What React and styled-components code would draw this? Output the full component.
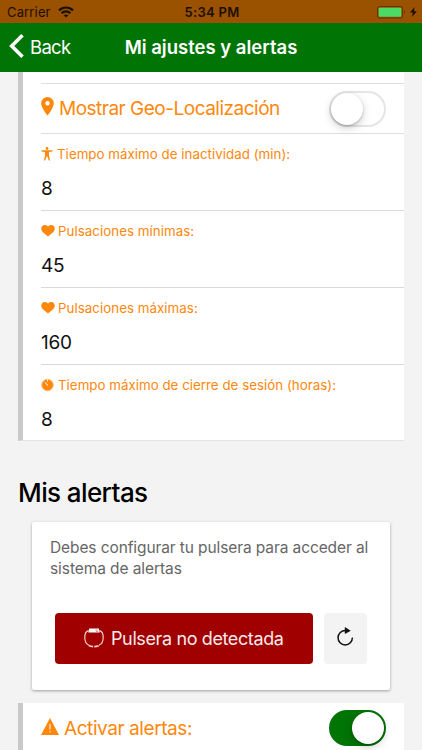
import React from "react";
import styled, { createGlobalStyle } from "styled-components";

const GlobalStyle = createGlobalStyle`
  * {
    box-sizing: border-box;
  }
  body {
    margin: 0;
    background: #f3f3f3;
    overflow: hidden;
    font-family: Inter, "Liberation Sans", sans-serif;
  }
`;

const Screen = styled.div`
  height: 750px;
  overflow: hidden;
  display: flex;
  flex-direction: column;
  background: #f3f3f3;
`;

const Text = styled.span`
  font-size: ${({ $size }) => $size}px;
  font-weight: ${({ $weight }) => $weight || 400};
  letter-spacing: ${({ $track }) => $track || 0}px;
  white-space: nowrap;
`;

const StatusBar = styled.header`
  flex: none;
  height: 23px;
  padding: 1px 5px 0 7px;
  display: grid;
  grid-template-columns: 1fr auto 1fr;
  align-items: center;
  background: #9a5200;
  color: #1c0f00;
`;

const StatusSide = styled.div`
  display: flex;
  align-items: center;
  justify-content: ${({ $end }) => ($end ? "flex-end" : "flex-start")};
  gap: ${({ $end }) => ($end ? 4 : 7)}px;
`;

const NavBar = styled.nav`
  flex: none;
  height: 49px;
  padding: 0 9px 1px;
  display: grid;
  grid-template-columns: 1fr auto 1fr;
  align-items: center;
  background: #007405;
  color: #fff;
`;

const BackButton = styled.div`
  display: flex;
  align-items: center;
  gap: 6px;
  svg {
    margin-bottom: 2px;
  }
`;

const Panel = styled.section`
  flex: none;
  margin: 0 18px;
  padding-left: 18px;
  background: #fff;
  border-left: 5px solid #c9c9c9;
`;

const SettingsPanel = styled(Panel)`
  padding-top: 11px;
  border-bottom: 1px solid #e4e4e4;
`;

const ToggleRow = styled.div`
  height: 51px;
  padding-right: 18px;
  display: flex;
  align-items: center;
  gap: ${({ $gap }) => $gap}px;
  border-top: 1px solid #dedede;
  border-bottom: 1px solid #dedede;
  color: #fe870c;
  > svg {
    margin-bottom: 4px;
  }
`;

const ActivateRow = styled(ToggleRow)`
  height: 50px;
  border: 0;
`;

const Toggle = styled.div`
  flex: none;
  width: 57px;
  height: 36px;
  margin-left: auto;
  padding: 2px;
  display: flex;
  justify-content: ${({ $on }) => ($on ? "flex-end" : "flex-start")};
  border-radius: 18px;
  background: ${({ $on }) => ($on ? "#007405" : "#fff")};
  box-shadow: ${({ $on }) => ($on ? "none" : "inset 0 0 0 2px #e5e5e5")};
`;

const Knob = styled.div`
  width: 32px;
  height: 32px;
  border-radius: 50%;
  background: #fff;
  box-shadow: 0 3px 8px rgba(0, 0, 0, 0.2), 0 1px 2px rgba(0, 0, 0, 0.22);
`;

const Field = styled.div`
  height: 77px;
  padding-top: 10px;
  border-bottom: 1px solid #d9d9d9;
  &:last-child {
    height: 75px;
    border-bottom: 0;
  }
`;

const FieldLabel = styled.div`
  height: 20px;
  display: flex;
  align-items: center;
  gap: ${({ $gap }) => $gap || 3}px;
  line-height: 20px;
  color: #fe870c;
  svg {
    margin-bottom: 1px;
  }
`;

const FieldValue = styled.div`
  margin-top: 13px;
  line-height: 24px;
  color: #111;
`;

const Heading = styled.h2`
  flex: none;
  height: 80px;
  margin: 0 0 0 18px;
  padding-top: 36px;
  line-height: 32px;
  color: #000;
`;

const AlertCard = styled.section`
  flex: none;
  height: 168px;
  margin: 1px 32px 13px;
  padding: 15px 18px 0;
  background: #fff;
  border-radius: 2px;
  box-shadow: 0 1px 3px rgba(0, 0, 0, 0.35);
`;

const CardText = styled.p`
  margin: 0;
  line-height: 21px;
  color: #666;
`;

const Actions = styled.div`
  display: flex;
  gap: 11px;
  margin: 34px 5px 0;
`;

const BandButton = styled.div`
  width: 258px;
  height: 51px;
  display: flex;
  align-items: center;
  padding-left: 29px;
  gap: 7px;
  border-radius: 4px;
  background: #a00000;
  color: #fbeaea;
  svg {
    margin-bottom: 1px;
  }
`;

const ReloadButton = styled.div`
  width: 43px;
  height: 51px;
  padding-bottom: 4px;
  display: flex;
  align-items: center;
  justify-content: center;
  border-radius: 4px;
  background: #f3f3f3;
`;

const WifiIcon = () => (
  <svg width="16" height="12" viewBox="0 0 16 12" fill="none" stroke="#1c0f00" strokeWidth="2.200">
    <path d="M1 4.400C5 .5 11 .5 15 4.400" />
    <path d="M3.600 7.200c2.500-2.500 6.300-2.500 8.800 0" />
    <path d="M8 11.600 5.700 9.300c1.300-1.200 3.300-1.200 4.600 0z" fill="#1c0f00" stroke="none" />
  </svg>
);

const BatteryIcon = () => (
  <svg width="29" height="13" viewBox="0 0 29 13">
    <rect x=".5" y=".5" width="25" height="11.500" rx="2" fill="none" stroke="#603300" />
    <rect x="1.700" y="1.700" width="22.600" height="9" rx="1" fill="#4cd964" />
    <path d="M27 4.500c1.500.6 1.500 3 0 3.600z" fill="#603300" />
  </svg>
);

const BoltIcon = () => (
  <svg width="7" height="10" viewBox="0 0 7 10">
    <path d="M4.500 0 0 5.500h2.800L2 10l4.800-5.800H4z" fill="#1c0f00" />
  </svg>
);

const BackIcon = () => (
  <svg width="15" height="24" viewBox="0 0 15 24" fill="none" stroke="#fff" strokeWidth="3.600">
    <path d="M13.500 1.300 2.700 12l10.800 10.700" />
  </svg>
);

const PinIcon = () => (
  <svg width="13" height="19" viewBox="0 0 13 19">
    <path
      fillRule="evenodd"
      fill="#fe870c"
      d="M6.500 0A6.300 6.300 0 0 0 .2 6.200C.2 10.800 6.500 18.600 6.500 18.600S12.800 10.800 12.800 6.200A6.300 6.300 0 0 0 6.500 0zm0 4.100a2.200 2.200 0 1 1 0 4.400 2.200 2.200 0 0 1 0-4.400z"
    />
  </svg>
);

const BodyIcon = () => (
  <svg width="12" height="14" viewBox="0 0 12 14" fill="#fe870c">
    <circle cx="6" cy="1.500" r="1.400" />
    <path d="M.5 3.300h11v1.100L7.900 5v3l1.200 5.500H7.900L6.400 9.500h-.8L4.100 13.500H2.900L4.100 8V5L.5 4.400z" />
  </svg>
);

const HeartIcon = () => (
  <svg width="14" height="12" viewBox="0 0 14 12">
    <path
      fill="#fe870c"
      d="M7 1.700C5.800-.4 2.800-.5 1.300 1c-1.500 1.600-1.300 4 0 5.500C2.600 8.200 5.200 9.700 7 11.600c1.800-1.900 4.400-3.400 5.700-5.100 1.300-1.500 1.500-3.900 0-5.500C11.200-.5 8.200-.4 7 1.700z"
    />
  </svg>
);

const TimerIcon = () => (
  <svg width="13" height="14" viewBox="0 0 14 14">
    <circle cx="7" cy="7" r="6.200" fill="#fe870c" stroke="#ffb766" strokeWidth="1" />
    <path d="M7 1v2M4.500 4.500l2.600 2.700" stroke="#ffe6cb" strokeWidth="1.100" strokeLinecap="round" />
  </svg>
);

const WarningIcon = () => (
  <svg width="18" height="17" viewBox="0 0 18 17">
    <path d="M9 0 18 17H0z" fill="#fe870c" />
    <path d="M9 6v5.500M9 13v1.500" stroke="#ffe0bd" strokeWidth="1.400" />
  </svg>
);

const BandIcon = () => (
  <svg width="20" height="20" viewBox="0 0 20 20" fill="none" stroke="#f6cccc" strokeWidth="1.200">
    <path d="M4.600 2.600C1.700 3.200.8 5.500.8 9.600c0 4.200 1 6.500 4.200 7.700" />
    <path d="M15.400 2.600c2.900.6 3.800 2.900 3.800 7 0 4.200-1 6.500-4.200 7.700" />
    <path d="M4.800 17.500c2.900 1.500 7.500 1.500 10.400 0" strokeWidth="1.700" strokeDasharray="4.500 1" />
    <path d="M5.200.5h9.600l.9 4H4.300z" fill="#fff" stroke="none" />
    <path d="M11.500 2h2M12 3.400h2" stroke="#d66" strokeWidth=".8" />
  </svg>
);

const ReloadIcon = () => (
  <svg width="17" height="19" viewBox="0 0 18 20">
    <path d="M16.300 11.200A7.600 7.600 0 1 1 9 3.700" fill="none" stroke="#111" strokeWidth="1.600" />
    <path d="M8.300 0v7.300L14.600 4z" fill="#111" />
  </svg>
);

const fields = [
  { icon: <BodyIcon />, gap: 4, label: "Tiempo máximo de inactividad (min):", track: 0.04, value: "8" },
  { icon: <HeartIcon />, label: "Pulsaciones mínimas:", track: 0.05, value: "45" },
  { icon: <HeartIcon />, label: "Pulsaciones máximas:", track: 0.05, value: "160" },
  { icon: <TimerIcon />, gap: 4, label: "Tiempo máximo de cierre de sesión (horas):", track: 0.03, value: "8" },
];

const App = () => {
  return (
    <Screen>
      <GlobalStyle />
      <StatusBar>
        <StatusSide>
          <Text $size={13} $track={0.15}>Carrier</Text>
          <WifiIcon />
        </StatusSide>
        <Text $size={13} $weight={600} $track={0.3}>5:34 PM</Text>
        <StatusSide $end>
          <BatteryIcon />
          <BoltIcon />
        </StatusSide>
      </StatusBar>
      <NavBar>
        <BackButton>
          <BackIcon />
          <Text $size={18.5} $track={-0.7}>Back</Text>
        </BackButton>
        <Text $size={18.5} $weight={600}>Mi ajustes y alertas</Text>
        <span />
      </NavBar>

      <SettingsPanel>
        <ToggleRow $gap={5}>
          <PinIcon />
          <Text $size={19} $track={-0.5}>Mostrar Geo-Localización</Text>
          <Toggle>
            <Knob />
          </Toggle>
        </ToggleRow>
        {fields.map((field) => (
          <Field key={field.label}>
            <FieldLabel $gap={field.gap}>
              {field.icon}
              <Text $size={13.3} $track={field.track}>{field.label}</Text>
            </FieldLabel>
            <FieldValue>
              <Text $size={19} $track={-0.3}>{field.value}</Text>
            </FieldValue>
          </Field>
        ))}
      </SettingsPanel>

      <Heading>
        <Text $size={26} $weight={450} $track={-0.6}>Mis alertas</Text>
      </Heading>

      <AlertCard>
        <CardText>
          <Text $size={15.5} $track={-0.1}>Debes configurar tu pulsera para acceder al</Text>
          <br />
          <Text $size={15.5} $track={-0.08}>sistema de alertas</Text>
        </CardText>
        <Actions>
          <BandButton>
            <BandIcon />
            <Text $size={18} $track={-0.38}>Pulsera no detectada</Text>
          </BandButton>
          <ReloadButton>
            <ReloadIcon />
          </ReloadButton>
        </Actions>
      </AlertCard>

      <Panel>
        <ActivateRow $gap={5}>
          <WarningIcon />
          <Text $size={19} $track={-0.43}>Activar alertas:</Text>
          <Toggle $on>
            <Knob />
          </Toggle>
        </ActivateRow>
      </Panel>
    </Screen>
  );
};

export default App;
